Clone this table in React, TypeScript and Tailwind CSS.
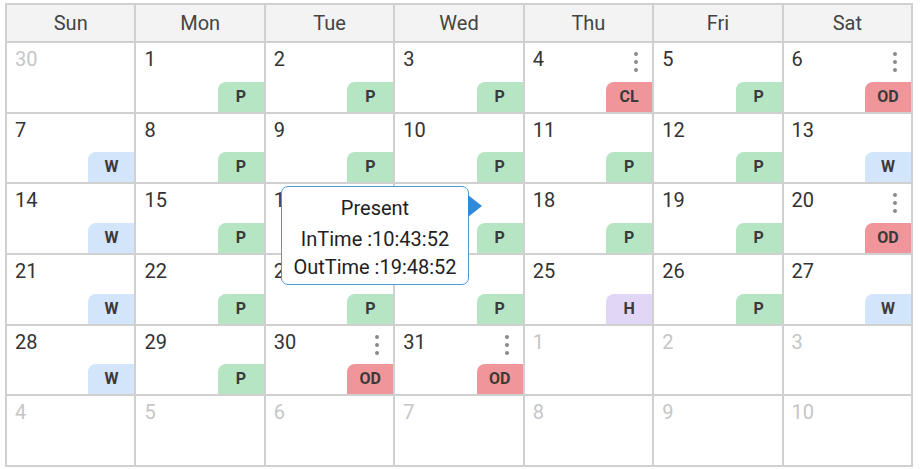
import React from 'react';

type Status = 'P' | 'W' | 'CL' | 'OD' | 'H';

interface Day {
  n: number;
  out?: boolean;
  status?: Status;
  menu?: boolean;
}

const badgeColor: Record<Status, string> = {
  P: 'bg-[#b6e5c3]',
  W: 'bg-[#d2e5fb]',
  CL: 'bg-[#f0969b]',
  OD: 'bg-[#f0969b]',
  H: 'bg-[#e2d6f6]',
};

const weekDays = ['Sun', 'Mon', 'Tue', 'Wed', 'Thu', 'Fri', 'Sat'];

const days: Day[] = [
  { n: 30, out: true },
  { n: 1, status: 'P' },
  { n: 2, status: 'P' },
  { n: 3, status: 'P' },
  { n: 4, status: 'CL', menu: true },
  { n: 5, status: 'P' },
  { n: 6, status: 'OD', menu: true },
  { n: 7, status: 'W' },
  { n: 8, status: 'P' },
  { n: 9, status: 'P' },
  { n: 10, status: 'P' },
  { n: 11, status: 'P' },
  { n: 12, status: 'P' },
  { n: 13, status: 'W' },
  { n: 14, status: 'W' },
  { n: 15, status: 'P' },
  { n: 16, status: 'P' },
  { n: 17, status: 'P' },
  { n: 18, status: 'P' },
  { n: 19, status: 'P' },
  { n: 20, status: 'OD', menu: true },
  { n: 21, status: 'W' },
  { n: 22, status: 'P' },
  { n: 23, status: 'P' },
  { n: 24, status: 'P' },
  { n: 25, status: 'H' },
  { n: 26, status: 'P' },
  { n: 27, status: 'W' },
  { n: 28, status: 'W' },
  { n: 29, status: 'P' },
  { n: 30, status: 'OD', menu: true },
  { n: 31, status: 'OD', menu: true },
  { n: 1, out: true },
  { n: 2, out: true },
  { n: 3, out: true },
  { n: 4, out: true },
  { n: 5, out: true },
  { n: 6, out: true },
  { n: 7, out: true },
  { n: 8, out: true },
  { n: 9, out: true },
  { n: 10, out: true },
];

function Kebab() {
  return (
    <div className="absolute right-[14px] top-[9px] flex flex-col gap-[4px]">
      <span className="w-[4px] h-[4px] rounded-full bg-[#8a8a8a]" />
      <span className="w-[4px] h-[4px] rounded-full bg-[#8a8a8a]" />
      <span className="w-[4px] h-[4px] rounded-full bg-[#8a8a8a]" />
    </div>
  );
}

function DayCell({ day }: { day: Day }) {
  return (
    <div className="relative bg-white flex flex-col justify-between">
      <div className={`pl-[8px] pt-[4px] text-[20px] leading-[24px] ${day.out ? 'text-[#c6c6c6]' : 'text-[#333]'}`}>
        {day.n}
      </div>
      {day.menu && <Kebab />}
      {day.status && (
        <div className="flex justify-end">
          <div
            className={`w-[46px] h-[30px] rounded-tl-[8px] flex items-center justify-center text-[16px] font-bold text-[#3a3a3a] ${badgeColor[day.status]}`}
          >
            {day.status}
          </div>
        </div>
      )}
    </div>
  );
}

export default function App() {
  return (
    <div className="w-[920px] h-[469px] bg-white relative font-['Roboto',sans-serif]">
      <div className="absolute left-[5px] top-[3px]">
        <div className="w-[908px] h-[464px] grid grid-cols-[repeat(7,1fr)] grid-rows-[36px_repeat(6,1fr)] gap-[2px] p-[2px] bg-[#d0d0d0]">
          {weekDays.map((d) => (
            <div key={d} className="bg-[#f3f3f3] flex items-center justify-center text-[20px] text-[#444]">
              {d}
            </div>
          ))}
          {days.map((d, i) => (
            <DayCell key={i} day={d} />
          ))}
        </div>
      </div>

      {/* hover tooltip */}
      <div className="absolute left-[281px] top-[186px] w-[188px] h-[99px] bg-white border border-[#4a9ad6] rounded-[7px] flex flex-col items-center pt-[7px] text-[20px] text-[#222] leading-[28px]">
        <div className="mb-[3px]">Present</div>
        <div>InTime :10:43:52</div>
        <div>OutTime :19:48:52</div>
        <svg className="absolute left-[186px] top-[8px]" width="15" height="22" viewBox="0 0 15 22">
          <path d="M0 0 L14 11 L0 22 Z" fill="#2f8bd8" />
        </svg>
      </div>
    </div>
  );
}
